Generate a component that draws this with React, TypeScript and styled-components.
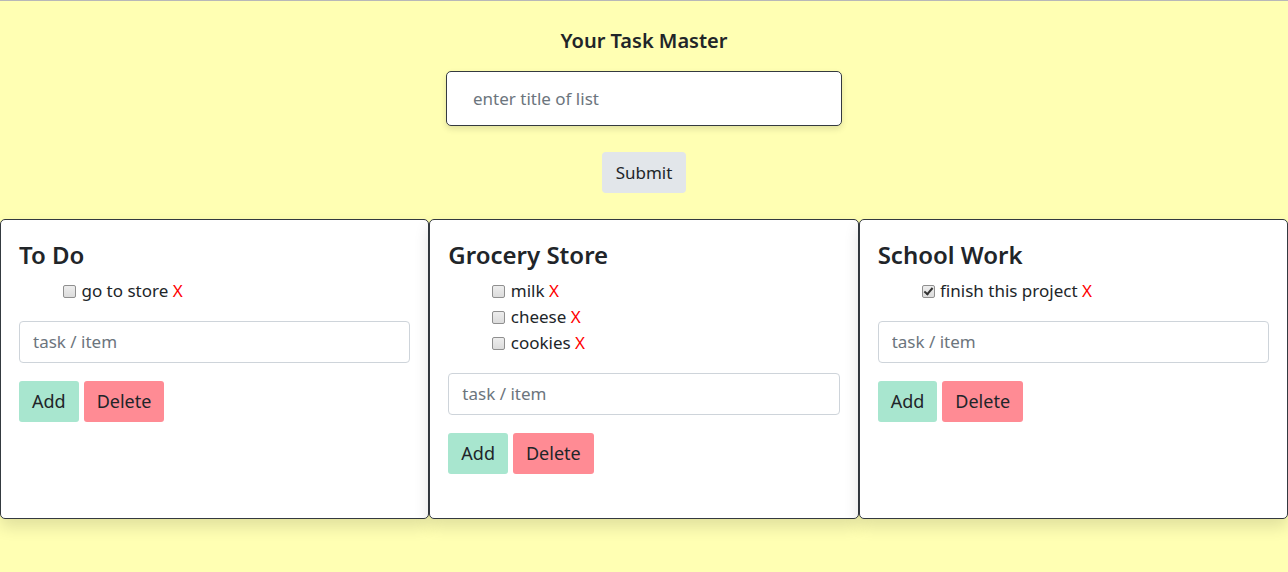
import React from 'react';
import styled, { createGlobalStyle } from 'styled-components';

const GlobalStyle = createGlobalStyle`
  html, body {
    margin: 0;
    padding: 0;
  }
  body {
    background: #ffffb3;
    border-top: 1px solid #b8b8b8;
    font-family: "Noto Sans", "Open Sans", sans-serif;
    color: #212529;
    min-height: 571px;
  }
`;

type List = { title: string; items: { text: string; done?: boolean }[] };

const lists: List[] = [
  { title: 'To Do', items: [{ text: 'go to store' }] },
  { title: 'Grocery Store', items: [{ text: 'milk' }, { text: 'cheese' }, { text: 'cookies' }] },
  { title: 'School Work', items: [{ text: 'finish this project', done: true }] },
];

export default function App() {
  return (
    <>
      <GlobalStyle />
      <Header>
        <PageTitle>Your Task Master</PageTitle>
        <TitleInput placeholder="enter title of list" />
        <SubmitButton>Submit</SubmitButton>
      </Header>
      <CardRow>
        {lists.map((list) => (
          <Card key={list.title}>
            <CardTitle>{list.title}</CardTitle>
            <ItemList>
              {list.items.map((item) => (
                <Item key={item.text}>
                  <Check type="checkbox" defaultChecked={item.done} /> {item.text} <Remove>X</Remove>
                </Item>
              ))}
            </ItemList>
            <ItemInput placeholder="task / item" />
            <Actions>
              <ActionButton $tone="add">Add</ActionButton>
              <ActionButton $tone="delete">Delete</ActionButton>
            </Actions>
          </Card>
        ))}
      </CardRow>
    </>
  );
}

const Header = styled.header`
  display: flex;
  flex-direction: column;
  align-items: center;
  padding-top: 28px;
`;

const PageTitle = styled.h1`
  margin: 0;
  font-size: 20px;
  line-height: 24px;
  font-weight: 600;
`;

const TitleInput = styled.input`
  box-sizing: border-box;
  margin-top: 18px;
  width: 396px;
  height: 55px;
  padding: 0 26px;
  border: 1px solid #343a40;
  border-radius: 5px;
  background: #fff;
  box-shadow: 0 3px 6px rgba(0, 0, 0, 0.12);
  font-family: inherit;
  font-size: 17px;
  color: #495057;
  outline: none;

  &::placeholder {
    color: #6c757d;
  }
`;

const SubmitButton = styled.button`
  margin-top: 26px;
  height: 41px;
  padding: 0 14px;
  border: none;
  border-radius: 4px;
  background: #e2e6ea;
  font-family: inherit;
  font-size: 17px;
  color: #212529;
`;

const CardRow = styled.main`
  display: flex;
  margin-top: 26px;
`;

const Card = styled.section`
  flex: 1;
  box-sizing: border-box;
  height: 300px;
  padding: 20px 18px;
  background: #fff;
  border: 1px solid #343a40;
  border-radius: 5px;
  box-shadow: 0 8px 16px rgba(0, 0, 0, 0.12);
`;

const CardTitle = styled.h2`
  margin: 1px 0 8px;
  font-size: 24px;
  line-height: 1.2;
  font-weight: 600;
`;

const ItemList = styled.ul`
  margin: 0 0 17px;
  padding-left: 40px;
  list-style: none;
`;

const Item = styled.li`
  font-size: 17px;
  line-height: 26px;
`;

const Check = styled.input`
  appearance: none;
  box-sizing: border-box;
  width: 13px;
  height: 13px;
  margin: 0 1px 0 4px;
  vertical-align: -1px;
  border: 1px solid #8f8f8f;
  border-radius: 2px;
  background: linear-gradient(#ededed, #dcdcdc);
  position: relative;

  &:checked::after {
    content: '';
    position: absolute;
    left: 3px;
    top: 0px;
    width: 3px;
    height: 7px;
    border: solid #333;
    border-width: 0 2px 2px 0;
    transform: rotate(40deg);
  }
`;

const Remove = styled.span`
  color: #ff0000;
`;

const ItemInput = styled.input`
  box-sizing: border-box;
  display: block;
  width: 100%;
  height: 42px;
  padding: 0 13px;
  border: 1px solid #ced4da;
  border-radius: 4px;
  font-family: inherit;
  font-size: 17px;
  outline: none;

  &::placeholder {
    color: #6c757d;
  }
`;

const Actions = styled.div`
  display: flex;
  gap: 5px;
  margin-top: 18px;
`;

const ActionButton = styled.button<{ $tone: 'add' | 'delete' }>`
  height: 41px;
  padding: 0 13px;
  border: none;
  border-radius: 3px;
  background: ${(p) => (p.$tone === 'add' ? '#a8e6cf' : '#ff8b94')};
  font-family: inherit;
  font-size: 18px;
  color: #212529;
`;
